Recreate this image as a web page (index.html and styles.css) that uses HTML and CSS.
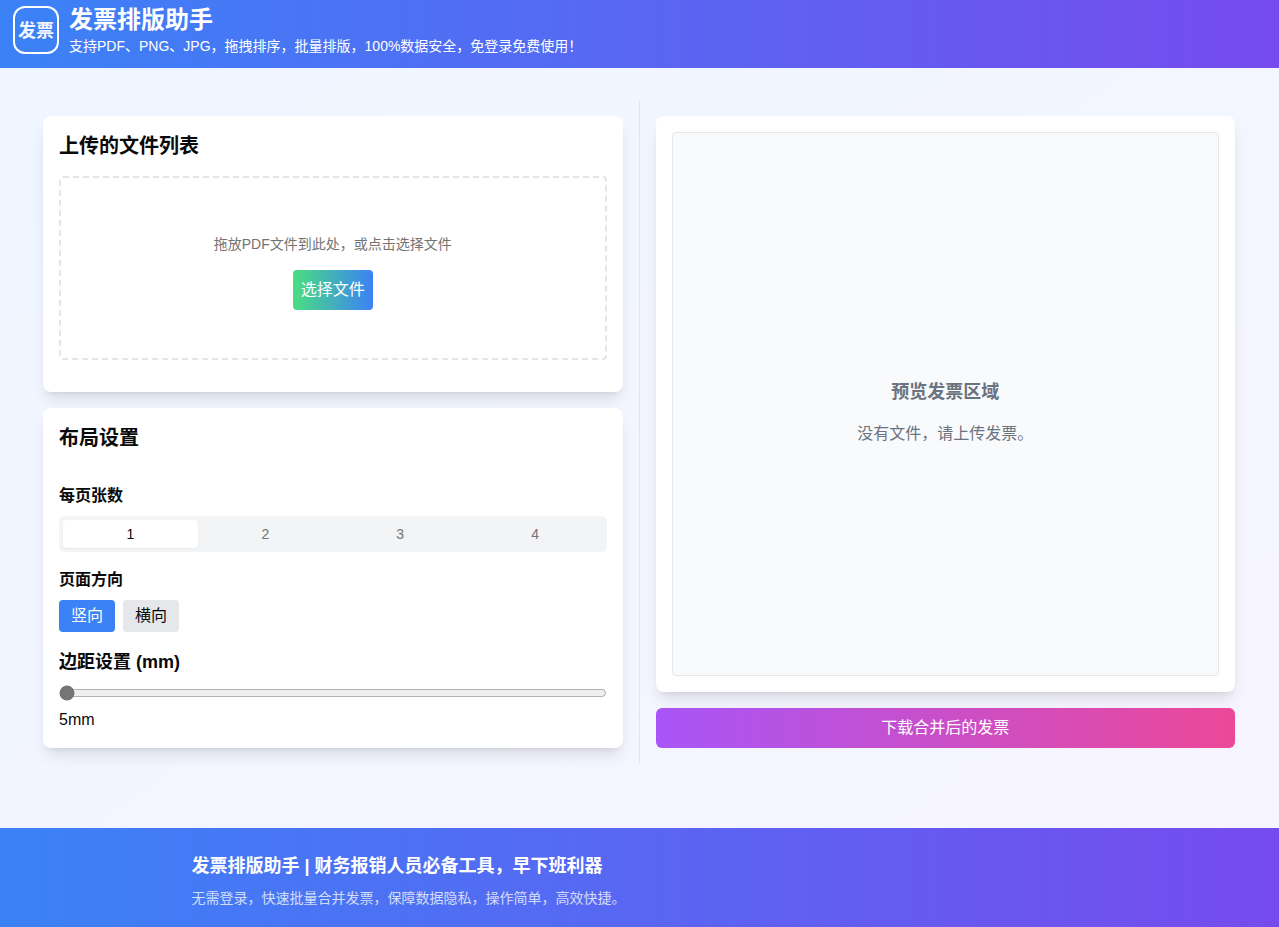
FILE: index.html
```html
<!DOCTYPE html>
<html lang="zh-CN">
<head>
<meta charset="utf-8">
<meta name="viewport" content="width=device-width, initial-scale=1">
<title>发票排版助手</title>
<link rel="stylesheet" href="styles.css">
</head>
<body>
<header class="site-header">
  <svg class="logo" viewBox="0 0 48 48" role="img" aria-label="发票">
    <rect x="2" y="1" width="44" height="46" rx="11" fill="none" stroke="#fff" stroke-width="2"/>
    <text x="24" y="31" text-anchor="middle" class="logo-text">发票</text>
  </svg>
  <div class="header-text">
    <h1 class="site-title">发票排版助手</h1>
    <p class="site-tagline">支持PDF、PNG、JPG，拖拽排序，批量排版，100%数据安全，免登录免费使用！</p>
  </div>
</header>
<main class="workspace">
  <div class="column column-left">
    <section class="card upload-card">
      <h2 class="card-title">上传的文件列表</h2>
      <div class="dropzone">
        <p class="dropzone-hint">拖放PDF文件到此处，或点击选择文件</p>
        <button type="button" class="choose-button">选择文件</button>
      </div>
    </section>
    <section class="card settings-card">
      <h2 class="card-title">布局设置</h2>
      <h3 class="field-title count-title">每页张数</h3>
      <div class="tabs" role="tablist" aria-label="每页张数">
        <button type="button" class="tab tab-active" role="tab" aria-selected="true">1</button>
        <button type="button" class="tab" role="tab" aria-selected="false">2</button>
        <button type="button" class="tab" role="tab" aria-selected="false">3</button>
        <button type="button" class="tab" role="tab" aria-selected="false">4</button>
      </div>
      <h3 class="field-title">页面方向</h3>
      <div class="directions">
        <button type="button" class="direction direction-active">竖向</button>
        <button type="button" class="direction">横向</button>
      </div>
      <label class="margin-title" for="margin">边距设置 (mm)</label>
      <input class="margin-slider" id="margin" type="range" min="5" max="50" value="5">
      <output class="margin-value" for="margin">5mm</output>
    </section>
  </div>
  <div class="column">
    <section class="card preview-card">
      <div class="preview">
        <h2 class="preview-title">预览发票区域</h2>
        <p class="preview-empty">没有文件，请上传发票。</p>
      </div>
    </section>
    <button type="button" class="download-button">下载合并后的发票</button>
  </div>
</main>
<footer class="site-footer">
  <div class="footer-inner">
    <h2 class="footer-title">发票排版助手 | 财务报销人员必备工具，早下班利器</h2>
    <p class="footer-text">无需登录，快速批量合并发票，保障数据隐私，操作简单，高效快捷。</p>
  </div>
</footer>
</body>
</html>
```
FILE: styles.css
```css
*, *::before, *::after { box-sizing: border-box; }
body, h1, h2, h3, p { margin: 0; }
body {
  min-height: 100vh;
  display: flex;
  flex-direction: column;
  font-family: "Liberation Sans", "Noto Sans CJK SC", sans-serif;
  font-size: 16px;
  line-height: 24px;
  color: #0a0a0a;
  background: linear-gradient(to bottom right, #eff6ff, #f7f5ff);
}
button { font: inherit; color: inherit; border: 0; cursor: pointer; }

.site-header, .site-footer {
  color: #fff;
  background: linear-gradient(to right, #3b82f6, #764bee);
}
.site-header {
  display: flex;
  align-items: center;
  gap: 9px;
  padding: 4px 12px 12px;
}
.logo { width: 48px; height: 48px; flex: none; }
.logo-text { font-size: 18px; font-weight: 700; fill: #f1f6ff; }
.site-title { font-size: 24px; line-height: 32px; font-weight: 700; }
.site-tagline { font-size: 14px; line-height: 20px; }

.workspace {
  flex: 1;
  display: flex;
  align-items: flex-start;
  width: 100%;
  max-width: 1280px;
  margin: 0 auto;
  padding: 32px 28px 64px 27px;
}
.column {
  flex: 1;
  align-self: stretch;
  display: flex;
  flex-direction: column;
  gap: 16px;
  padding: 16px;
}
.column-left { border-right: 1px solid #e5e5e5; }

.card {
  padding: 16px;
  border-radius: 8px;
  background: #fff;
  box-shadow: 0 10px 15px -3px rgb(0 0 0 / 10%), 0 4px 6px -4px rgb(0 0 0 / 10%);
}
.card-title { font-size: 20px; line-height: 28px; font-weight: 700; }

.upload-card { padding-bottom: 32px; }
.dropzone {
  display: flex;
  flex-direction: column;
  align-items: center;
  justify-content: center;
  gap: 16px;
  min-height: 184px;
  margin-top: 16px;
  padding-top: 8px;
  border: 2px dashed #e5e5e5;
  border-radius: 4px;
}
.dropzone-hint { font-size: 14px; line-height: 20px; color: #737373; }
.choose-button {
  padding: 8px;
  border-radius: 4px;
  color: #fff;
  background: linear-gradient(to right, #4ade80, #3b82f6);
}

.settings-card { display: flex; flex-direction: column; }
.field-title { margin-bottom: 8px; font-size: 16px; font-weight: 700; }
.count-title { margin-top: 32px; }
.tabs {
  display: flex;
  margin-bottom: 16px;
  padding: 4px;
  border-radius: 6px;
  background: #f3f4f6;
}
.tab {
  flex: 1;
  padding: 4px 12px;
  border-radius: 4px;
  background: none;
  font-size: 14px;
  line-height: 20px;
  color: #737373;
}
.tab-active {
  color: #0a0a0a;
  background: #fff;
  box-shadow: 0 1px 2px rgb(0 0 0 / 6%);
}
.directions { display: flex; gap: 8px; }
.direction { padding: 4px 12px; border-radius: 4px; background: #e5e7eb; }
.direction-active { color: #fff; background: #3b82f6; }
.margin-title { margin-top: 16px; font-size: 18px; line-height: 28px; font-weight: 700; }
.margin-slider { width: 100%; height: 16px; margin: 9px 0 7px; accent-color: #757575; }

.preview-card { flex: 1; display: flex; }
.preview {
  flex: 1;
  display: flex;
  flex-direction: column;
  align-items: center;
  justify-content: center;
  gap: 16px;
  padding-top: 16px;
  border: 1px solid #e5e7eb;
  border-radius: 4px;
  background: #f9fafb;
  color: #6b7280;
}
.preview-title { font-size: 18px; line-height: 28px; font-weight: 700; }
.download-button {
  padding: 8px 16px;
  border-radius: 6px;
  color: #fff;
  background: linear-gradient(to right, #a855f7, #ec4899);
}

.site-footer { padding: 24px 16px 19px; }
.footer-inner { max-width: 896px; margin: 0 auto; }
.footer-title { margin-bottom: 8px; font-size: 18px; line-height: 28px; font-weight: 700; }
.footer-text { font-size: 14px; line-height: 20px; opacity: 0.75; }
```
